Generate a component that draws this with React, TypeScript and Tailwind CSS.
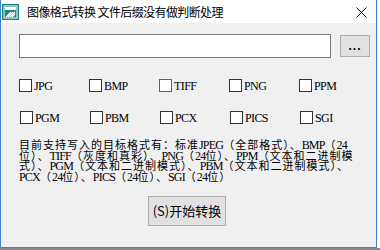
import React from "react";

const cjk = '"Noto Sans CJK SC", "Noto Sans", sans-serif';
const serif = '"Liberation Serif", "Noto Sans CJK SC", serif';

// SimSun-like mix: latin runs in serif, cjk runs on a 12px grid
function Mixed({ text }: { text: string }) {
  const parts = text.match(/[\x20-\x7e]+|[^\x20-\x7e]+/g) || [];
  return (
    <>
      {parts.map((p, i) =>
        /^[\x20-\x7e]+$/.test(p) ? (
          <span key={i} className="text-[12px] tracking-[-0.8px]" style={{ fontFamily: serif }}>
            {p}
          </span>
        ) : (
          <span key={i} className="tracking-[1px]">
            {p}
          </span>
        )
      )}
    </>
  );
}

const row1 = ["JPG", "BMP", "TIFF", "PNG", "PPM"];
const row2 = ["PGM", "PBM", "PCX", "PICS", "SGI"];

const lines = [
  "目前支持写入的目标格式有：标准JPEG（全部格式）、BMP（24",
  "位）、TIFF（灰度和真彩）、PNG（24位）、PPM（文本和二进制模",
  "式）、PGM（文本和二进制模式）、PBM（文本和二进制模式）、",
  "PCX（24位）、PICS（24位）、SGI（24位）",
];

function Check({ label, hover }: { label: string; hover?: boolean }) {
  return (
    <div className="flex w-[70px] items-center gap-[2px]">
      <div
        className={
          hover
            ? "h-[13px] w-[13px] border border-[#0078d7] bg-white"
            : "h-[13px] w-[13px] border border-[#333333] bg-white"
        }
      />
      <span className="text-[12px] leading-none tracking-[-0.6px] text-black" style={{ fontFamily: serif }}>
        {label}
      </span>
    </div>
  );
}

function AppIcon() {
  return (
    <svg width="17" height="16" viewBox="0 0 17 16">
      <rect x="0" y="0" width="17" height="16" fill="#1a8580" />
      <rect x="2" y="2" width="13" height="12" fill="none" stroke="#fff" strokeWidth="1" />
      <rect x="3" y="3" width="11" height="3" fill="#fff" />
      <path d="M4 13 L9 8 M6 13 L11 8 M8 13 L13 8 M10 13 L13 10" stroke="#fff" strokeWidth="1.2" />
    </svg>
  );
}

export default function App() {
  return (
    <div className="flex h-[250px] w-[380px] flex-col bg-white" style={{ fontFamily: cjk }}>
      <div className="flex h-[248px] w-[377px] flex-col border-x border-b border-[#3c84d0]">
        {/* title bar */}
        <div className="flex h-[23px] items-center bg-white pl-[1px] pt-[1px]">
          <AppIcon />
          <span className="ml-[8px] text-[12px] tracking-[-0.6px] text-black">
            图像格式转换 文件后缀没有做判断处理
          </span>
          <div className="flex-1" />
          <svg width="11" height="11" viewBox="0 0 11 11" className="mr-[9px]">
            <path d="M0.5 0.5 L10.5 10.5 M10.5 0.5 L0.5 10.5" stroke="#000" strokeWidth="1" />
          </svg>
        </div>

        {/* body */}
        <div className="flex flex-1 flex-col bg-[#f0f0f0] pl-[18px] pt-[11px]">
          <div className="flex items-center">
            <div className="h-[24px] w-[312px] border border-[#7a7a7a] bg-white" />
            <div className="ml-[9px] flex h-[22px] w-[30px] items-center justify-center border border-[#adadad] bg-[#e1e1e1]">
              <span className="text-[12px] font-bold leading-none tracking-[1px] text-black" style={{ fontFamily: '"Liberation Sans", sans-serif' }}>
                ...
              </span>
            </div>
          </div>

          <div className="mt-[21px] flex">
            {row1.map((l) => (
              <Check key={l} label={l} hover={l === "TIFF"} />
            ))}
          </div>
          <div className="mt-[19px] flex pl-[1px]">
            {row2.map((l) => (
              <Check key={l} label={l} />
            ))}
          </div>

          <div className="mt-[15px] text-[11px] text-black">
            {lines.map((l, i) => (
              <div key={i} className="h-[10.67px] whitespace-nowrap leading-[10.67px]">
                <Mixed text={l} />
              </div>
            ))}
          </div>

          <div className="mt-[14px] flex pl-[129px]">
            <div className="flex h-[30px] w-[78px] items-center justify-center border border-[#adadad] bg-[#e1e1e1]">
              <span className="text-[13px] text-black">(S)开始转换</span>
            </div>
          </div>
        </div>
      </div>
      <div className="h-[2px] w-full bg-[#8a8a8a]" />
    </div>
  );
}
